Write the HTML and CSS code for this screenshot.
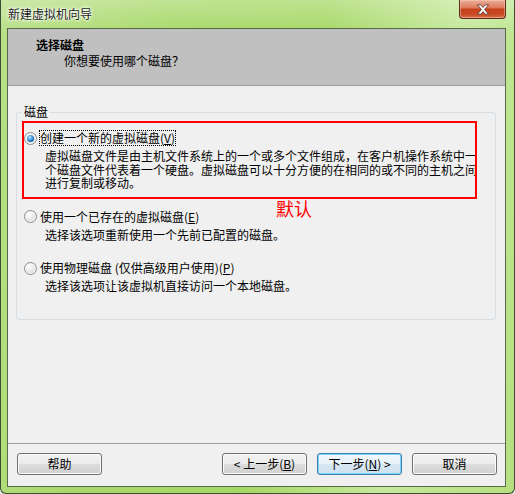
FILE: index.html
```html
<!DOCTYPE html>
<html lang="zh-CN">
<head>
<meta charset="utf-8">
<title>新建虚拟机向导</title>
<link rel="stylesheet" href="styles.css">
</head>
<body>
<div class="window">
  <div class="titlebar">
    <span class="title">新建虚拟机向导</span>
    <div class="close">
      <svg width="14" height="11" viewBox="0 0 14 11"><path d="M1.5 0.8h3.2l2.3 2.6 2.3-2.6h3.2l-3.9 4.7 3.9 4.7h-3.2l-2.3-2.6-2.3 2.6h-3.2l3.9-4.7z" fill="#fff" stroke="#5b3a33" stroke-width="0.9" stroke-linejoin="round"/></svg>
    </div>
  </div>
  <div class="client">
    <div class="header">
      <div class="h-title">选择磁盘</div>
      <div class="h-sub">你想要使用哪个磁盘？</div>
    </div>
    <div class="content">
      <fieldset class="group">
        <legend>磁盘</legend>
        <div class="opt">
          <div class="opt-row">
            <span class="radio checked"></span>
            <span class="label focus">创建一个新的虚拟磁盘(<u>V</u>)</span>
          </div>
          <div class="desc">虚拟磁盘文件是由主机文件系统上的一个或多个文件组成，在客户机操作系统中一<br>个磁盘文件代表着一个硬盘。虚拟磁盘可以十分方便的在相同的或不同的主机之间<br>进行复制或移动。</div>
        </div>
        <div class="opt">
          <div class="opt-row">
            <span class="radio"></span>
            <span class="label">使用一个已存在的虚拟磁盘(<u>E</u>)</span>
          </div>
          <div class="desc">选择该选项重新使用一个先前已配置的磁盘。</div>
        </div>
        <div class="opt">
          <div class="opt-row">
            <span class="radio"></span>
            <span class="label">使用物理磁盘 (仅供高级用户使用)(<u>P</u>)</span>
          </div>
          <div class="desc">选择该选项让该虚拟机直接访问一个本地磁盘。</div>
        </div>
      </fieldset>
      <div class="annot-box"></div>
      <div class="annot-text">默认</div>
    </div>
    <div class="footer">
      <button class="btn help">帮助</button>
      <button class="btn">&lt; 上一步(<u>B</u>)</button>
      <button class="btn default">下一步(<u>N</u>) &gt;</button>
      <button class="btn">取消</button>
    </div>
  </div>
</div>
</body>
</html>
```
FILE: styles.css
```css
* { box-sizing: border-box; }
html, body { margin: 0; padding: 0; }
body {
  width: 515px;
  height: 494px;
  overflow: hidden;
  background: #dfe4e0;
  font-family: "Noto Sans CJK SC", "Microsoft YaHei", sans-serif;
  font-size: 12px;
  color: #000;
}
.window {
  width: 515px;
  height: 494px;
  display: flex;
  flex-direction: column;
  border: 1px solid #3d4d33;
  border-top: none;
  border-radius: 0 0 6px 6px;
  padding: 0 8px 6px 6px;
  background:
    linear-gradient(180deg, rgba(255,255,255,0.28) 0, rgba(255,255,255,0.05) 28px, rgba(255,255,255,0) 40px),
    linear-gradient(100deg, #b9e088 0%, #a8d96a 28%, #a6d866 55%, #c6e99c 78%, #b6df7f 100%);
}
.titlebar {
  flex: none;
  height: 28px;
  display: flex;
  align-items: flex-start;
}
.title {
  padding-left: 1px;
  line-height: 28px;
  color: #1c1c1c;
  text-shadow: 0 0 5px #fff, 0 0 3px #fff, 0 0 2px #fff;
}
.close {
  margin-left: auto;
  width: 47px;
  height: 19px;
  border: 1px solid #5c2a1f;
  border-top: none;
  border-radius: 0 0 4px 4px;
  background: linear-gradient(180deg, #eab09a 0%, #dd7a5c 42%, #c5411c 52%, #c84a22 80%, #d9714a 100%);
  box-shadow: inset 0 0 0 1px rgba(255, 210, 190, 0.45);
  display: flex;
  align-items: center;
  justify-content: center;
}
.close svg { display: block; }
.client {
  flex: 1;
  display: flex;
  flex-direction: column;
  background: #f0f0f0;
  border: 1px solid #56694a;
}
.header {
  flex: none;
  height: 57px;
  background: #c0c0c0;
  border-bottom: 1px solid #9c9c9c;
  padding: 9px 0 0 28px;
}
.h-title {
  font-weight: bold;
  line-height: 14px;
}
.h-sub {
  margin-top: 2px;
  padding-left: 28px;
  line-height: 14px;
}
.content {
  flex: 1;
  position: relative;
  padding: 19px 9px 0 8px;
}
.group {
  margin: 0;
  min-width: 0;
  border: 1px solid #d5dfe5;
  border-radius: 3px;
  padding: 11px 4px 24px 5px;
}
.group legend {
  padding: 0 2px;
  line-height: 14px;
}
.opt {
  display: flex;
  flex-direction: column;
}
.opt + .opt { margin-top: 17px; }
.opt-row {
  display: flex;
  align-items: center;
  height: 16px;
  padding-left: 2px;
}
.radio {
  flex: none;
  width: 13px;
  height: 13px;
  border-radius: 50%;
  border: 1px solid #8b8d8e;
  background: radial-gradient(circle at 35% 30%, #ffffff 0, #ececec 40%, #d3d3d3 100%);
  box-shadow: inset 0 0 0 1px #f6f6f6;
  display: flex;
  align-items: center;
  justify-content: center;
}
.radio.checked::after {
  content: "";
  width: 7px;
  height: 7px;
  border-radius: 50%;
  background: radial-gradient(circle at 40% 35%, #d4f0ff 0, #5fb0ea 30%, #1d6cb8 65%, #0d3f78 100%);
}
.label {
  margin-left: 2px;
  line-height: 14px;
  border: 1px solid transparent;
  white-space: nowrap;
}
.label.focus { border: 1px dotted #000; }
.desc {
  margin-top: 5px;
  padding-left: 23px;
  font-family: "Liberation Sans", "Noto Sans CJK SC", sans-serif;
  line-height: 13.5px;
  white-space: nowrap;
}
.annot-box {
  position: absolute;
  left: 14px;
  top: 35px;
  width: 455px;
  height: 78px;
  border: 2px solid #ff0000;
}
.annot-text {
  position: absolute;
  left: 268px;
  top: 112px;
  color: #ff0000;
  font-size: 18px;
  line-height: 20px;
}
.footer {
  flex: none;
  height: 43px;
  border-top: 1px solid #a0a0a0;
  padding: 9px 8px 0 9px;
  display: flex;
  align-items: flex-start;
  gap: 10px;
}
.btn {
  width: 85px;
  height: 22px;
  padding: 0;
  border: 1px solid #707070;
  border-radius: 3px;
  background: linear-gradient(180deg, #f2f2f2 0%, #ebebeb 50%, #dddddd 51%, #cfcfcf 100%);
  box-shadow: inset 0 0 0 1px #fbfbfb;
  font-family: inherit;
  font-size: 12px;
  line-height: 20px;
  color: #000;
  text-align: center;
}
.btn.help { margin-right: auto; }
.btn.default {
  border-color: #3c7fb1;
  background: linear-gradient(180deg, #f1f8fc 0%, #e6f1f8 50%, #d8e8f2 51%, #cde0ee 100%);
  box-shadow: inset 0 0 0 1px #7fd3f5;
}
```
